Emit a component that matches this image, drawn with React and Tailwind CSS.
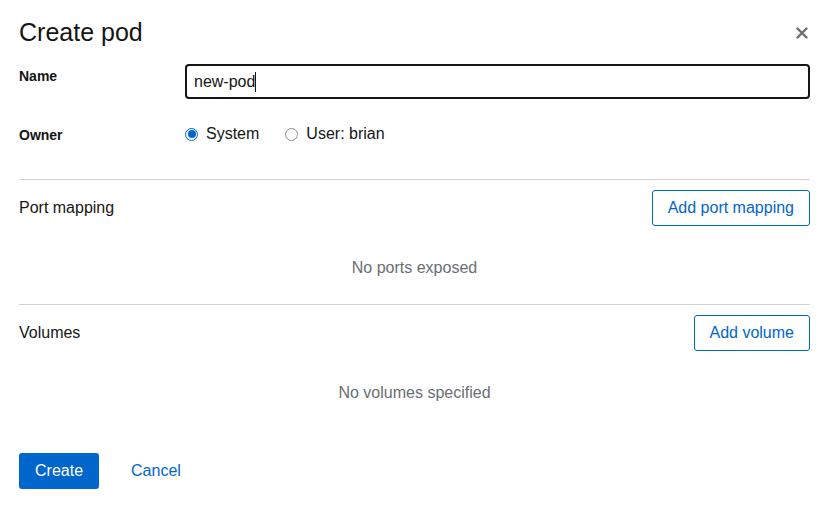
import React from 'react';

function Radio({ checked, label }) {
  return (
    <label className="flex items-center gap-2">
      <span
        className={`w-[13px] h-[13px] rounded-full flex items-center justify-center border ${
          checked ? 'border-[#0066cc] bg-white' : 'border-[#8a8d90] bg-white'
        }`}
      >
        {checked && <span className="w-[8px] h-[8px] rounded-full bg-[#0066cc]" />}
      </span>
      <span className="text-base text-[#151515] leading-5">{label}</span>
    </label>
  );
}

function Section({ title, action, empty, pt }) {
  return (
    <div>
      <div className={`flex items-center justify-between ${pt}`}>
        <span className="text-base text-[#151515]">{title}</span>
        <button className="h-9 px-[15px] border border-[#0066cc] rounded-[3px] text-base text-[#0066cc] bg-white">
          {action}
        </button>
      </div>
      <p className="text-center text-base text-[#6a6e73] leading-5 mt-[32px]">{empty}</p>
    </div>
  );
}

export default function App() {
  return (
    <div
      className="w-[830px] h-[505px] bg-white pl-[19px] pr-5 pt-[14px] text-[#151515]"
      style={{ fontFamily: '"Liberation Sans", Arial, sans-serif' }}
    >
      <div className="flex items-center justify-between">
        <h1 className="text-[25px] leading-9">Create pod</h1>
        <button className="text-[#6a6e73] mr-[2px] mt-[2px]">
          <svg width="12" height="12" viewBox="0 0 12 12">
            <path d="M1.5 1.5 L10.5 10.5 M10.5 1.5 L1.5 10.5" stroke="currentColor" strokeWidth="2.4" strokeLinecap="round" />
          </svg>
        </button>
      </div>

      <div className="mt-[14px] flex items-start">
        <label className="w-[166px] text-sm font-bold leading-5 pt-[2px]">Name</label>
        <div className="flex-1 h-[35px] border-2 border-[#151515] rounded-[4px] flex items-center px-[7px]">
          <span className="text-base">new-pod</span>
          <span className="w-px h-[20px] bg-[#151515]" />
        </div>
      </div>

      <div className="mt-[24px] flex items-center">
        <label className="w-[166px] text-sm font-bold leading-5 pt-[2px]">Owner</label>
        <div className="flex items-center gap-[26px]">
          <Radio checked label="System" />
          <Radio label="User: brian" />
        </div>
      </div>

      <div className="mt-[34px] border-t border-[#d2d2d2]" />
      <Section title="Port mapping" action="Add port mapping" empty="No ports exposed" pt="pt-[10px]" />

      <div className="mt-[26px] border-t border-[#d2d2d2]" />
      <Section title="Volumes" action="Add volume" empty="No volumes specified" pt="pt-[10px]" />

      <div className="mt-[50px] flex items-center gap-8">
        <button className="h-9 px-4 bg-[#0066cc] text-white rounded-[3px] text-base">Create</button>
        <button className="text-[#0066cc] text-base">Cancel</button>
      </div>
    </div>
  );
}
